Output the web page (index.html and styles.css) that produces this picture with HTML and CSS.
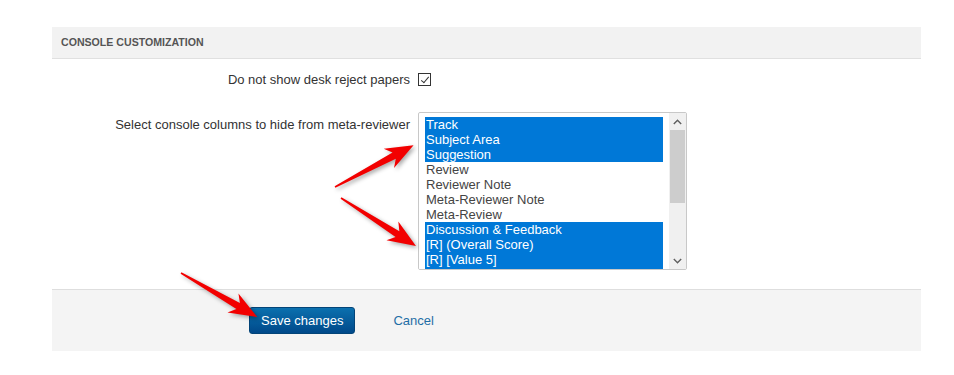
FILE: index.html
```html
<!DOCTYPE html>
<html lang="en">
<head>
  <meta charset="UTF-8">
  <meta name="viewport" content="width=device-width, initial-scale=1.0">
  <title>Console Customization</title>
  <link rel="stylesheet" href="styles.css">
</head>
<body>
  <div class="panel">
    <div class="panel-heading">Console Customization</div>

    <div class="panel-body">
      <label class="field-label" for="hideDeskReject">Do not show desk reject papers</label>
      <div class="field-control">
        <input type="checkbox" id="hideDeskReject" class="check" checked>
      </div>

      <label class="field-label field-label-top" for="hiddenColumns">Select console columns to hide from meta-reviewer</label>
      <div class="field-control">
        <div class="list-box">
          <select id="hiddenColumns" class="col-list" multiple>
            <option selected>Track</option>
            <option selected>Subject Area</option>
            <option selected>Suggestion</option>
            <option>Review</option>
            <option>Reviewer Note</option>
            <option>Meta-Reviewer Note</option>
            <option>Meta-Review</option>
            <option selected>Discussion &amp; Feedback</option>
            <option selected>[R] (Overall Score)</option>
            <option selected>[R] [Value 5]</option>
            <option selected>[R] [Another Value Added Question]</option>
            <option selected>[R] [Confidence]</option>
            <option>[R] [Originality]</option>
            <option>[R] [Clarity]</option>
            <option>[R] [Technical Quality]</option>
            <option>[R] [Relevance]</option>
            <option>[R] [Comments to Authors]</option>
          </select>
          <div class="scrollbar">
            <div class="sb-btn">
              <svg width="9" height="6" viewBox="0 0 9 6"><polyline points="0.8,5 4.5,1.3 8.2,5"/></svg>
            </div>
            <div class="sb-track"><div class="sb-thumb"></div></div>
            <div class="sb-btn">
              <svg width="9" height="6" viewBox="0 0 9 6"><polyline points="0.8,1 4.5,4.7 8.2,1"/></svg>
            </div>
          </div>
        </div>
      </div>
    </div>

    <div class="panel-footer">
      <button class="btn-save">Save changes</button>
      <a href="#" class="link-cancel">Cancel</a>
    </div>
  </div>

  <!-- annotation arrows -->
  <svg class="arrows" width="954" height="375" viewBox="0 0 954 375">
    <g transform="translate(335 187) rotate(-28)">
      <polygon points="0,-0.8 67,-3.5 61,-11 89,0 61,11 67,3.5 0,0.8"/>
    </g>
    <g transform="translate(341 198) rotate(32.6)">
      <polygon points="0,-0.8 67,-3.5 61,-11 89,0 61,11 67,3.5 0,0.8"/>
    </g>
    <g transform="translate(181 273) rotate(30)">
      <polygon points="0,-0.8 66,-3.5 60,-11 88,0 60,11 66,3.5 0,0.8"/>
    </g>
  </svg>
</body>
</html>
```

FILE: styles.css
```css
body {
  margin: 0;
  position: relative;
  background: #fff;
  font-family: "Liberation Sans", Arial, sans-serif;
  font-size: 13px;
  color: #333;
}
.panel {
  width: 869px;
  margin: 27px 0 0 52px;
}
.panel-heading {
  height: 31px;
  line-height: 31px;
  padding-left: 9px;
  background-color: #f2f2f2;
  border-bottom: 1px solid #e0e0e0;
  font-size: 10.6px;
  font-weight: bold;
  text-transform: uppercase;
  color: #555;
}
.panel-body {
  display: grid;
  grid-template-columns: 358px auto;
  column-gap: 8px;
  row-gap: 25px;
  padding: 13px 0 19px;
}
.field-label {
  text-align: right;
  line-height: 15px;
  align-self: center;
}
.field-label-top {
  align-self: start;
  padding-top: 5px;
}
.field-control {
  display: flex;
  align-items: center;
}
.check {
  appearance: none;
  -webkit-appearance: none;
  position: relative;
  width: 13px;
  height: 13px;
  margin: 0;
  border: 1px solid #333;
  background: #fff;
}
.check:checked::after {
  content: "";
  position: absolute;
  left: 3.5px;
  top: 0.5px;
  width: 3px;
  height: 7px;
  border-right: 1.5px solid #333;
  border-bottom: 1.5px solid #333;
  transform: rotate(40deg);
}
.list-box {
  display: flex;
  width: 267px;
  height: 156px;
  border: 1px solid #c8c8c8;
  border-radius: 2px;
  background: #fff;
  overflow: hidden;
}
.col-list {
  flex: 1;
  min-width: 0;
  height: 182px;
  margin: 0;
  padding: 4px 6px 0;
  border: none;
  background: #fff;
  font-family: "Liberation Sans", Arial, sans-serif;
  font-size: 13px;
  color: #444;
  outline: none;
  overflow: hidden;
}
.col-list option {
  padding: 0 1px;
  min-height: 0;
  line-height: 15px;
  color: #444;
}
.col-list option:checked {
  background: #0078d7 linear-gradient(#0078d7, #0078d7);
  color: #fff;
}
.scrollbar {
  display: flex;
  flex-direction: column;
  width: 17px;
  height: 156px;
  background-color: #f0f0f0;
}
.sb-btn {
  display: flex;
  align-items: center;
  justify-content: center;
  height: 17px;
}
.sb-btn svg {
  fill: none;
  stroke: #606060;
  stroke-width: 1.4;
}
.sb-track {
  flex: 1;
  padding: 0 1px;
}
.sb-thumb {
  height: 73px;
  background-color: #cdcdcd;
}
.panel-footer {
  display: flex;
  align-items: center;
  height: 61px;
  padding-left: 197px;
  background-color: #f4f4f4;
  border-top: 1px solid #dedede;
}
.btn-save {
  height: 27px;
  padding: 0 11px;
  border: 1px solid #034478;
  border-radius: 3px;
  background: linear-gradient(#0b70ae, #00498a);
  color: #fff;
  font-family: "Liberation Sans", Arial, sans-serif;
  font-size: 13px;
  cursor: pointer;
}
.link-cancel {
  margin-left: 38px;
  color: #1f6ea6;
  text-decoration: none;
}
.arrows {
  position: absolute;
  top: 0;
  left: 0;
  pointer-events: none;
  fill: #f20000;
  filter: drop-shadow(2px 2px 2px rgba(0, 0, 0, 0.35));
}
```
